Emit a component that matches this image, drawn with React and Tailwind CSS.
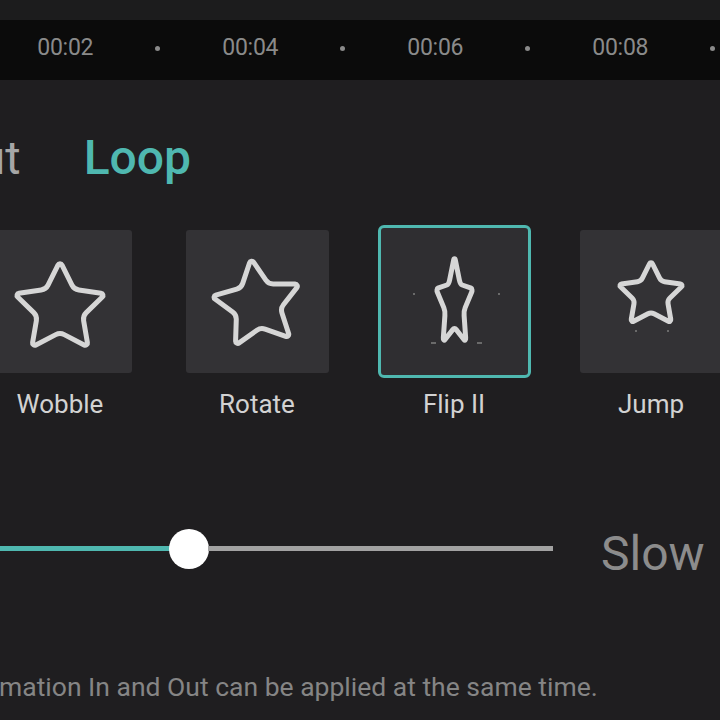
import React from "react";

const STAR =
  "M11.525 2.295a.53.53 0 0 1 .95 0l2.31 4.679a2.123 2.123 0 0 0 1.595 1.16l5.166.756a.53.53 0 0 1 .294.904l-3.736 3.638a2.123 2.123 0 0 0-.611 1.878l.882 5.14a.53.53 0 0 1-.771.56l-4.618-2.428a2.122 2.122 0 0 0-1.973 0L6.396 21.01a.53.53 0 0 1-.77-.56l.881-5.139a2.122 2.122 0 0 0-.611-1.879L2.16 9.795a.53.53 0 0 1 .294-.906l5.165-.755a2.122 2.122 0 0 0 1.597-1.16z";

function Star({ w, h, className = "" }) {
  return (
    <svg
      width={w}
      height={h}
      viewBox="2 2.05 20 19.2"
      preserveAspectRatio="none"
      overflow="visible"
      className={className}
    >
      <path
        d={STAR}
        fill="none"
        stroke="#d6d6d6"
        strokeWidth="5"
        vectorEffect="non-scaling-stroke"
        strokeLinejoin="round"
      />
    </svg>
  );
}

function Dot({ className }) {
  return <div className={"absolute w-[2px] h-[2px] bg-[#6a6a6a] " + className} />;
}

export default function App() {
  const times = ["00:02", "00:04", "00:06", "00:08"];
  return (
    <div
      className="w-[720px] h-[720px] overflow-hidden bg-[#1f1e20] flex flex-col"
      style={{ fontFamily: "Roboto, 'Noto Sans', sans-serif" }}
    >
      <div className="h-[20px] bg-[#1c1c1d] shrink-0" />
      <div className="h-[60px] bg-[#0b0b0b] shrink-0 flex items-center pl-[19px] pb-[5px]">
        {times.map((t) => (
          <React.Fragment key={t}>
            <div className="w-[92.5px] shrink-0 text-center text-[23px] leading-none text-[#8a8a8a] tracking-[-0.3px]">
              {t}
            </div>
            <div className="w-[92.5px] shrink-0 flex justify-center pt-[2px]">
              <div className="w-[5px] h-[5px] rounded-full bg-[#8a8a8a]" />
            </div>
          </React.Fragment>
        ))}
      </div>

      <div className="h-[145px] shrink-0 flex items-start pt-[54px]">
        <div className="text-[47px] leading-none text-[#a6a6a6] ml-[-53px]">Out</div>
        <div className="text-[48px] leading-none font-medium text-[#4fb8b0] ml-[63px]">Loop</div>
      </div>

      <div className="flex ml-[-38.5px] shrink-0">
        {[
          { name: "Wobble", kind: "wobble" },
          { name: "Rotate", kind: "rotate" },
          { name: "Flip II", kind: "flip" },
          { name: "Jump", kind: "jump" },
        ].map((it) => (
          <div key={it.name} className="w-[197px] shrink-0 flex flex-col items-center">
            <div className="h-[153px] flex items-center justify-center">
              {it.kind === "flip" ? (
                <div className="w-[153px] h-[153px] rounded-[6px] border-[3px] border-[#4fb8b0] bg-[#2f2e31] relative flex items-center justify-center">
                  <Star w={35} h={82} className="mt-[-4px]" />
                  <Dot className="left-[32px] top-[65px]" />
                  <Dot className="left-[117px] top-[65px]" />
                  <Dot className="left-[50px] top-[114px] w-[5px]" />
                  <Dot className="left-[96px] top-[114px] w-[5px]" />
                </div>
              ) : (
                <div className="w-[143px] h-[143px] rounded-[3px] bg-[#333235] relative flex items-center justify-center">
                  {it.kind === "wobble" && <Star w={86} h={82} className="mt-[6px]" />}
                  {it.kind === "rotate" && <Star w={84} h={80} className="-rotate-[8deg] mt-[-2px]" />}
                  {it.kind === "jump" && (
                    <>
                      <Star w={62} h={59} className="mt-[-18px]" />
                      <Dot className="left-[55px] top-[100px]" />
                      <Dot className="left-[87px] top-[100px]" />
                    </>
                  )}
                </div>
              )}
            </div>
            <div className="mt-[13px] text-[26px] leading-none text-[#d2d2d2]">{it.name}</div>
          </div>
        ))}
      </div>

      <div className="h-[161px] shrink-0 flex items-end">
        <div className="flex items-center w-full">
          <div className="w-[170px] h-[5px] bg-[#4fb8b0]" />
          <div className="w-[40px] h-[40px] rounded-full bg-white shrink-0 -mx-[1px]" />
          <div className="w-[345px] h-[5px] bg-[#a2a2a2]" />
          <div className="ml-[48px] mt-[11px] text-[48px] leading-none text-[#8c8c8c]">Slow</div>
        </div>
      </div>

      <div className="mt-[96px] ml-[-1px] text-[26.5px] leading-none text-[#858585] whitespace-nowrap">
        mation In and Out can be applied at the same time.
      </div>
    </div>
  );
}
